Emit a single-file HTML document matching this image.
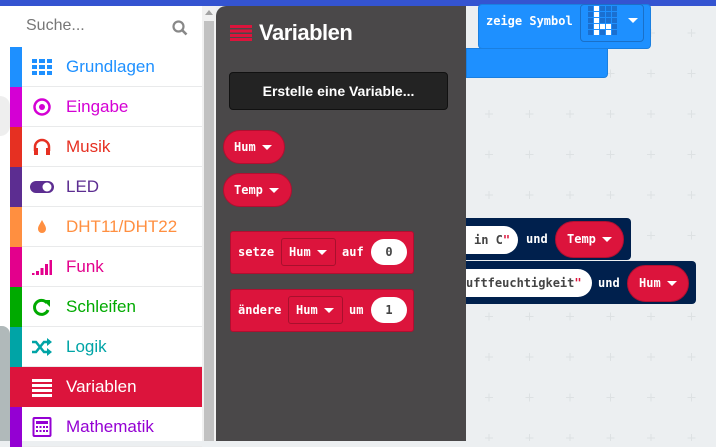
<!DOCTYPE html>
<html><head><meta charset="utf-8"><style>
*{margin:0;padding:0;box-sizing:border-box}
body{width:716px;height:441px;overflow:hidden;position:relative;background:#eceff1;font-family:"Liberation Sans",sans-serif}
.top{position:absolute;left:0;top:0;width:716px;height:6px;background:#3454d1}
.ws{position:absolute;left:466px;top:6px;right:0;bottom:0;background:#eceff1}
.left{position:absolute;left:0;top:6px;width:10px;height:435px;background:#fff}
.tb{position:absolute;left:10px;top:6px;width:192px;height:435px;background:#fff}
.row{position:absolute;left:0;width:192px;height:40px;border-bottom:1px solid #e9eaeb}
.row .s{position:absolute;left:0;top:0;width:12px;height:40px}
.row .t{position:absolute;left:56px;top:10px;font-size:17px}
.row .i{position:absolute;left:22px;top:10px;width:20px;height:20px}
.sb{position:absolute;left:202px;top:6px;width:14px;height:435px;background:#f1f1f1}
.fl{position:absolute;left:216px;top:6px;width:250px;height:435px;background:#4a4849;border-top-left-radius:10px}
.mono{font-family:"DejaVu Sans Mono","Liberation Mono",monospace;font-weight:bold;font-size:12px;color:#fff}
.pill{position:absolute;background:#dc143c;border:1px solid #b00f30;border-radius:18px;height:34px}
.blk{position:absolute;background:#dc143c;border:1px solid #b00f30;border-radius:3px}
.dd{position:absolute;border:1px solid #a8102d;border-radius:3px;height:28px}
.num{position:absolute;background:#fff;border-radius:14px;height:26px;color:#444;text-align:center;line-height:26px}
.tri{display:inline-block;width:0;height:0;border-left:5px solid transparent;border-right:5px solid transparent;border-top:5px solid #fff;vertical-align:middle;margin-left:6px}
</style></head><body>
<div class="ws">
<svg width="250" height="435" style="position:absolute;left:0;top:0">
<defs><pattern id="p" x="3" y="7" width="40.5" height="40.5" patternUnits="userSpaceOnUse"><path d="M20 16v8M16 20h8" stroke="#dde1e3" stroke-width="1"/></pattern></defs>
<rect width="250" height="435" fill="url(#p)"/></svg>
</div>
<div class="top"></div>
<div class="left"><div style="position:absolute;left:0;top:320px;width:10px;height:115px;background:#b0b9ba;border-top-right-radius:8px"></div><div style="position:absolute;left:0;top:90px;width:10px;height:40px;background:#eee;border-radius:0 20px 20px 0"></div></div>
<div style="position:absolute;left:478px;top:4px;width:173px;height:45px;background:#1e90ff;border:1px solid #1a7fe0;border-radius:4px"></div>
<div style="position:absolute;left:466px;top:48px;width:142px;height:30px;background:#1e90ff;border:1px solid #1a7fe0;border-radius:0 0 4px 0"></div>
<div class="mono" style="position:absolute;left:486px;top:14px;font-size:12px">zeige Symbol</div>
<div style="position:absolute;left:580px;top:4px;width:64px;height:38px;border:1px solid #1a70c8;border-radius:4px"></div>
<svg style="position:absolute;left:587px;top:5px" width="32" height="32">
<g fill="#1a6fd0"><rect x="1" y="1" width="5" height="5"/><rect x="13" y="1" width="5" height="5"/><rect x="19" y="1" width="5" height="5"/><rect x="25" y="1" width="5" height="5"/><rect x="1" y="7" width="5" height="5"/><rect x="13" y="7" width="5" height="5"/><rect x="19" y="7" width="5" height="5"/><rect x="25" y="7" width="5" height="5"/><rect x="1" y="13" width="5" height="5"/><rect x="13" y="13" width="5" height="5"/><rect x="19" y="13" width="5" height="5"/><rect x="25" y="13" width="5" height="5"/><rect x="1" y="19" width="5" height="5"/><rect x="25" y="19" width="5" height="5"/><rect x="1" y="25" width="5" height="5"/><rect x="13" y="25" width="5" height="5"/><rect x="25" y="25" width="5" height="5"/></g>
<g fill="#fff"><rect x="7" y="1" width="5" height="5"/><rect x="7" y="7" width="5" height="5"/><rect x="7" y="13" width="5" height="5"/><rect x="7" y="19" width="5" height="5"/><rect x="7" y="25" width="5" height="5"/><rect x="13" y="19" width="5" height="5"/><rect x="19" y="19" width="5" height="5"/><rect x="19" y="25" width="5" height="5"/></g></svg>
<div class="tri" style="position:absolute;left:622px;top:18px"></div>
<div style="position:absolute;left:462px;top:218px;width:169px;height:42px;background:#00204d;border-radius:4px"></div>
<div style="position:absolute;left:462px;top:261px;width:234px;height:43px;background:#00204d;border-radius:4px"></div>
<div class="mono" style="position:absolute;left:462px;top:226px;width:56px;height:28px;background:#fff;border-radius:0 14px 14px 0;color:#444;line-height:28px;padding-left:12px">in C<span style="color:#dc143c">"</span></div>
<div class="mono" style="position:absolute;left:526px;top:232px">und</div>
<div class="pill mono" style="left:555px;top:221px;width:69px;height:37px;border-radius:19px;line-height:35px;padding-left:11px">Temp<span class="tri"></span></div>
<div class="mono" style="position:absolute;left:462px;top:269px;width:130px;height:28px;background:#fff;border-radius:0 14px 14px 0;color:#444;line-height:28px;padding-left:4px">uftfeuchtigkeit<span style="color:#dc143c">"</span></div>
<div class="mono" style="position:absolute;left:598px;top:276px">und</div>
<div class="pill mono" style="left:627px;top:265px;width:62px;height:37px;border-radius:19px;line-height:35px;padding-left:11px">Hum<span class="tri"></span></div>
<div class="tb">
<div style="position:absolute;left:16px;top:11px;font-size:16px;color:#777">Suche...</div>
<svg style="position:absolute;left:162px;top:14px" width="16" height="16"><circle cx="6.5" cy="6.5" r="5" fill="none" stroke="#888" stroke-width="2.2"/><path d="M10.5 10.5l4 4" stroke="#888" stroke-width="2.6"/></svg>
<div class="row" style="top:41px"><div class="s" style="background:#1e90ff"></div><svg class="i" viewBox="0 0 20 20"><g fill="#1e90ff"><rect x="0" y="2" width="5" height="4"/><rect x="7" y="2" width="6" height="4"/><rect x="15" y="2" width="5" height="4"/><rect x="0" y="8" width="5" height="4"/><rect x="7" y="8" width="6" height="4"/><rect x="15" y="8" width="5" height="4"/><rect x="0" y="14" width="5" height="4"/><rect x="7" y="14" width="6" height="4"/><rect x="15" y="14" width="5" height="4"/></g></svg><div class="t" style="color:#1e90ff">Grundlagen</div></div>
<div class="row" style="top:81px"><div class="s" style="background:#d400d4"></div><svg class="i" viewBox="0 0 20 20"><circle cx="10" cy="10" r="7.5" fill="none" stroke="#d400d4" stroke-width="2.5"/><circle cx="10" cy="10" r="3" fill="#d400d4"/></svg><div class="t" style="color:#d400d4">Eingabe</div></div>
<div class="row" style="top:121px"><div class="s" style="background:#e63022"></div><svg class="i" viewBox="0 0 20 20"><path d="M3 14V10a7 7 0 0 1 14 0v4" fill="none" stroke="#e63022" stroke-width="2.5"/><rect x="2" y="11" width="4" height="7" fill="#e63022"/><rect x="14" y="11" width="4" height="7" fill="#e63022"/></svg><div class="t" style="color:#e63022">Musik</div></div>
<div class="row" style="top:161px"><div class="s" style="background:#5c2d91"></div><svg class="i" viewBox="0 0 24 20" style="width:24px;left:20px"><rect x="0" y="4" width="24" height="12" rx="6" fill="#5c2d91"/><circle cx="17" cy="10" r="4.5" fill="#fff"/></svg><div class="t" style="color:#5c2d91">LED</div></div>
<div class="row" style="top:201px"><div class="s" style="background:#ff8f40"></div><svg class="i" viewBox="0 0 20 20"><path d="M10 3C8 7 6 9 6 12a4 4 0 0 0 8 0c0-3-2-5-4-9z" fill="#ff8f40"/></svg><div class="t" style="color:#ff8f40">DHT11/DHT22</div></div>
<div class="row" style="top:241px"><div class="s" style="background:#e3008c"></div><svg class="i" viewBox="0 0 20 20"><g fill="#e3008c"><rect x="0" y="16" width="2.5" height="2"/><rect x="4" y="14" width="3" height="4"/><rect x="8.5" y="11" width="3" height="7"/><rect x="13" y="7" width="3" height="11"/><rect x="17.5" y="3" width="2.5" height="15"/></g></svg><div class="t" style="color:#e3008c">Funk</div></div>
<div class="row" style="top:281px"><div class="s" style="background:#00aa00"></div><svg class="i" viewBox="0 0 20 20"><path d="M16 13A7 7 0 1 1 15 6" fill="none" stroke="#00aa00" stroke-width="3"/><path d="M11 3l7 0l0 7z" fill="#00aa00"/></svg><div class="t" style="color:#00aa00">Schleifen</div></div>
<div class="row" style="top:321px"><div class="s" style="background:#00a4a6"></div><svg class="i" viewBox="0 0 20 20"><path d="M0 5h4l8 10h4M0 15h4l8-10h4" fill="none" stroke="#00a4a6" stroke-width="2.5"/><path d="M15 1l5 4-5 4zM15 11l5 4-5 4z" fill="#00a4a6"/></svg><div class="t" style="color:#00a4a6">Logik</div></div>
<div class="row" style="top:361px;background:#dc143c;border:none"><svg class="i" viewBox="0 0 20 20"><g fill="#fff"><rect x="0" y="2" width="20" height="3"/><rect x="0" y="7" width="20" height="3"/><rect x="0" y="12" width="20" height="3"/><rect x="0" y="17" width="20" height="3"/></g></svg><div class="t" style="color:#fff">Variablen</div></div>
<div class="row" style="top:401px"><div class="s" style="background:#9400d3"></div><svg class="i" viewBox="0 0 20 20"><rect x="1.5" y="1" width="17" height="18" rx="1" fill="none" stroke="#9400d3" stroke-width="2"/><rect x="4" y="4" width="12" height="3" fill="#9400d3"/><g fill="#9400d3"><rect x="4" y="9" width="2" height="2"/><rect x="7.5" y="9" width="2" height="2"/><rect x="11" y="9" width="2" height="2"/><rect x="14" y="9" width="2" height="2"/><rect x="4" y="13" width="2" height="2"/><rect x="7.5" y="13" width="2" height="2"/><rect x="11" y="13" width="2" height="2"/><rect x="14" y="13" width="2" height="2"/></g></svg><div class="t" style="color:#9400d3">Mathematik</div></div>
</div>
<div class="sb"><div style="position:absolute;left:3px;top:4px;width:0;height:0;border-left:4px solid transparent;border-right:4px solid transparent;border-bottom:5px solid #a3a3a3"></div><div style="position:absolute;left:2px;top:15px;width:10px;height:420px;background:#c1c1c1"></div></div>
<div class="fl">
<svg style="position:absolute;left:14px;top:19px" width="22" height="16"><g fill="#dc143c"><rect y="0" width="22" height="3"/><rect y="4.5" width="22" height="3"/><rect y="9" width="22" height="3"/><rect y="13" width="22" height="3"/></g></svg>
<div style="position:absolute;left:43px;top:14px;font-size:22px;color:#fff;font-weight:bold;letter-spacing:-0.5px">Variablen</div>
<div style="position:absolute;left:13px;top:66px;width:219px;height:38px;background:#232323;border:1px solid #111;border-radius:4px;color:#fff;font-size:14px;font-weight:bold;text-align:center;line-height:36px">Erstelle eine Variable...</div>
<div class="pill mono" style="left:7px;top:124px;width:62px;line-height:32px;padding-left:10px">Hum<span class="tri"></span></div>
<div class="pill mono" style="left:7px;top:167px;width:69px;line-height:32px;padding-left:10px">Temp<span class="tri"></span></div>
<div class="blk" style="left:14px;top:225px;width:184px;height:43px"></div>
<div class="mono" style="position:absolute;left:22px;top:239px">setze</div>
<div class="dd mono" style="left:65px;top:232px;width:55px;line-height:26px;padding-left:7px">Hum<span class="tri"></span></div>
<div class="mono" style="position:absolute;left:126px;top:239px">auf</div>
<div class="num mono" style="left:155px;top:233px;width:36px">0</div>
<div class="blk" style="left:14px;top:283px;width:184px;height:43px"></div>
<div class="mono" style="position:absolute;left:22px;top:297px">ändere</div>
<div class="dd mono" style="left:72px;top:290px;width:55px;line-height:26px;padding-left:7px">Hum<span class="tri"></span></div>
<div class="mono" style="position:absolute;left:133px;top:297px">um</div>
<div class="num mono" style="left:155px;top:291px;width:36px">1</div>
</div>
</body></html>
